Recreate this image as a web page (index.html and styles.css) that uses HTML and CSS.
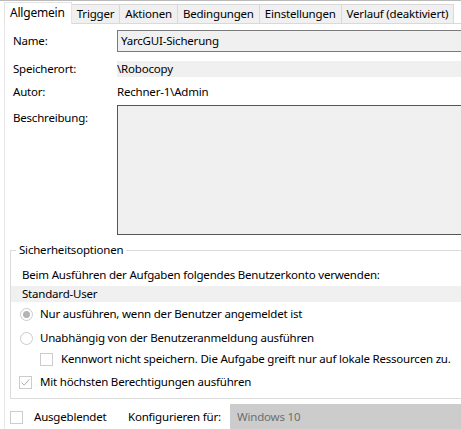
FILE: index.html
```html
<!DOCTYPE html>
<html lang="de">
<head>
<meta charset="utf-8">
<title>Allgemein</title>
<link rel="stylesheet" href="styles.css">
</head>
<body>
<div class="topline"></div>
<div class="tabs">
  <div class="tab selected">Allgemein</div>
  <div class="tab">Trigger</div>
  <div class="tab">Aktionen</div>
  <div class="tab">Bedingungen</div>
  <div class="tab">Einstellungen</div>
  <div class="tab">Verlauf (deaktiviert)</div>
</div>
<div class="panel">
  <div class="form">
    <div class="row row-name">
      <span class="label">Name:</span>
      <div class="input">YarcGUI-Sicherung</div>
    </div>
    <div class="row row-loc">
      <span class="label">Speicherort:</span>
      <div class="band">\Robocopy</div>
    </div>
    <div class="row row-author">
      <span class="label">Autor:</span>
      <div class="value">Rechner-1\Admin</div>
    </div>
    <div class="row row-desc">
      <span class="label label-top">Beschreibung:</span>
      <div class="textarea"></div>
    </div>
  </div>
  <fieldset class="group">
    <legend class="legend">Sicherheitsoptionen</legend>
    <div class="line account-label">Beim Ausführen der Aufgaben folgendes Benutzerkonto verwenden:</div>
    <div class="line account-band">Standard-User</div>
    <div class="line opt opt-r1"><span class="radio checked"></span>Nur ausführen, wenn der Benutzer angemeldet ist</div>
    <div class="line opt opt-r2"><span class="radio"></span>Unabhängig von der Benutzeranmeldung ausführen</div>
    <div class="line opt opt-c1"><span class="check"></span>Kennwort nicht speichern. Die Aufgabe greift nur auf lokale Ressourcen zu.</div>
    <div class="line opt opt-c2"><span class="check checked"><svg width="11" height="11" viewBox="0 0 11 11"><path d="M1.5 5.5 L4.2 8.2 L9.5 2.2" fill="none" stroke="#b0b0b0" stroke-width="1"/></svg></span>Mit höchsten Berechtigungen ausführen</div>
  </fieldset>
  <div class="bottom">
    <span class="check bottom-check"></span>
    <span class="hidden-label">Ausgeblendet</span>
    <span class="config-label">Konfigurieren für:</span>
    <div class="combo">Windows 10</div>
  </div>
</div>
</body>
</html>
```
FILE: styles.css
```css
html, body {
  margin: 0;
  padding: 0;
}
body {
  width: 461px;
  height: 429px;
  overflow: hidden;
  background: #ffffff;
  color: #000000;
  font-family: "Noto Sans", "Open Sans", "Liberation Sans", sans-serif;
  font-size: 11.5px;
  letter-spacing: -0.2px;
  line-height: 16px;
}
.topline {
  height: 1px;
  background: #b9b9b9;
}
.tabs {
  display: flex;
  align-items: flex-end;
  height: 22px;
  padding-left: 4px;
}
.tab {
  box-sizing: border-box;
  height: 19px;
  line-height: 17px;
  padding: 0 5px;
  background: #f0f0f0;
  border: 1px solid #d9d9d9;
  border-bottom: none;
  margin-left: -1px;
  white-space: nowrap;
}
.tab.selected {
  height: 22px;
  line-height: 20px;
  margin-bottom: -1px;
  margin-left: 0;
  background: #ffffff;
  border-color: #e3e3e3;
  position: relative;
  z-index: 1;
  padding: 0 6px 0 5px;
  font-size: 12px;
}
.panel {
  margin-left: 4px;
  border-top: 1px solid #d9d9d9;
  border-left: 1px solid #e8e8e8;
  height: 420px;
}
.form {
  padding-left: 8px;
}
.row {
  display: flex;
  align-items: center;
}
.label {
  width: 104px;
  flex: none;
}
.row-name {
  margin-top: 6px;
}
.input {
  flex: 1;
  box-sizing: border-box;
  height: 22px;
  line-height: 20px;
  border: 1px solid #7a7a7a;
  border-right: none;
  background: #f0f0f0;
  padding-left: 3px;
}
.row-loc {
  margin-top: 9px;
}
.band {
  flex: 1;
  height: 16px;
  background: #f0f0f0;
}
.row-author {
  margin-top: 7px;
}
.row-desc {
  margin-top: 5px;
  align-items: flex-start;
}
.label-top {
  padding-top: 5px;
}
.textarea {
  flex: 1;
  box-sizing: border-box;
  height: 130px;
  border: 1px solid #555555;
  border-right: none;
  background: #f0f0f0;
}
.group {
  margin: 7px -20px 0 5px;
  padding: 0 0 8px 0;
  border: 1px solid #dcdcdc;
  min-width: 0;
}
.legend {
  margin-left: 5px;
  padding: 0 3px;
  line-height: 16px;
}
.line {
  white-space: nowrap;
}
.account-label {
  margin-top: 9px;
  padding-left: 11px;
}
.account-band {
  margin-top: 3px;
  padding-left: 11px;
  background: #f0f0f0;
}
.opt {
  display: flex;
  align-items: center;
  height: 16px;
}
.opt-r1 {
  margin-top: 4px;
  padding-left: 9px;
}
.opt-r2 {
  margin-top: 8px;
  padding-left: 9px;
}
.opt-c1 {
  margin-top: 5px;
  padding-left: 29px;
}
.opt-c2 {
  margin-top: 7px;
  padding-left: 8px;
}
.radio {
  flex: none;
  box-sizing: border-box;
  width: 13px;
  height: 13px;
  border: 1px solid #cccccc;
  border-radius: 50%;
  margin-right: 7px;
  display: flex;
  align-items: center;
  justify-content: center;
}
.radio.checked::after {
  content: "";
  width: 7px;
  height: 7px;
  border-radius: 50%;
  background: #b4b4b4;
}
.check {
  flex: none;
  box-sizing: border-box;
  width: 13px;
  height: 13px;
  border: 1px solid #cccccc;
  margin-right: 8px;
  display: flex;
  align-items: center;
  justify-content: center;
}
.bottom {
  display: flex;
  align-items: center;
  margin-top: 5px;
  height: 26px;
}
.bottom-check {
  margin-left: 5px;
  margin-right: 11px;
}
.hidden-label {
  width: 94px;
  flex: none;
}
.config-label {
  width: 102px;
  flex: none;
}
.combo {
  flex: 1;
  height: 26px;
  line-height: 26px;
  background: #cccccc;
  color: #6e6e6e;
  padding-left: 7px;
}
```
